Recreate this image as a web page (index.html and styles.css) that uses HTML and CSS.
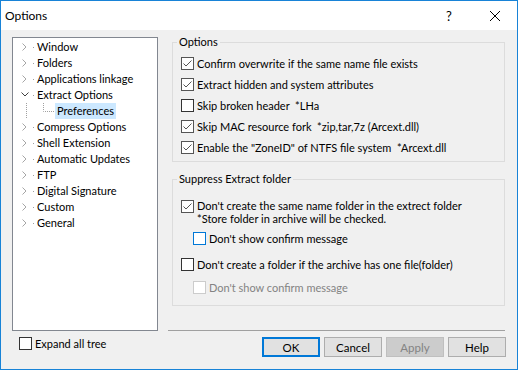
FILE: index.html
```html
<!doctype html>
<html lang="en">
<head>
<meta charset="utf-8">
<title>Options</title>
<link rel="stylesheet" href="styles.css">
</head>
<body>

<div class="window">
  <div class="titlebar">
    <span class="title">Options</span>
    <span class="tb-btn tb-help">?</span>
    <span class="tb-btn tb-close">
      <svg width="10" height="10" viewBox="0 0 10 10"><path d="M0 0L10 10M10 0L0 10" stroke="#000" stroke-width="1"/></svg>
    </span>
  </div>

  <div class="panes">
    <!-- settings tree -->
    <ul class="tree">
      <li><svg class="exp" width="18" height="16"><path d="M9.5 4.5L13 8L9.5 11.5"/></svg><i class="stub"></i><span class="node">Window</span></li>
      <li><svg class="exp" width="18" height="16"><path d="M9.5 4.5L13 8L9.5 11.5"/></svg><i class="stub"></i><span class="node">Folders</span></li>
      <li><svg class="exp" width="18" height="16"><path d="M9.5 4.5L13 8L9.5 11.5"/></svg><i class="stub"></i><span class="node">Applications linkage</span></li>
      <li><svg class="exp open" width="18" height="16"><path d="M8.5 5.5L12 9L15.5 5.5"/></svg><i class="stub"></i><span class="node">Extract Options</span></li>
      <li class="child">
        <svg width="42" height="16" class="lines">
          <path d="M13.5 0V16M30.5 0V8.5H42"/>
        </svg>
        <span class="node sel">Preferences</span>
      </li>
      <li><svg class="exp" width="18" height="16"><path d="M9.5 4.5L13 8L9.5 11.5"/></svg><i class="stub"></i><span class="node">Compress Options</span></li>
      <li><svg class="exp" width="18" height="16"><path d="M9.5 4.5L13 8L9.5 11.5"/></svg><i class="stub"></i><span class="node">Shell Extension</span></li>
      <li><svg class="exp" width="18" height="16"><path d="M9.5 4.5L13 8L9.5 11.5"/></svg><i class="stub"></i><span class="node">Automatic Updates</span></li>
      <li><svg class="exp" width="18" height="16"><path d="M9.5 4.5L13 8L9.5 11.5"/></svg><i class="stub"></i><span class="node">FTP</span></li>
      <li><svg class="exp" width="18" height="16"><path d="M9.5 4.5L13 8L9.5 11.5"/></svg><i class="stub"></i><span class="node">Digital Signature</span></li>
      <li><svg class="exp" width="18" height="16"><path d="M9.5 4.5L13 8L9.5 11.5"/></svg><i class="stub"></i><span class="node">Custom</span></li>
      <li><svg class="exp" width="18" height="16"><path d="M9.5 4.5L13 8L9.5 11.5"/></svg><i class="stub"></i><span class="node">General</span></li>
    </ul>

    <!-- property page -->
    <div class="page">
      <fieldset class="group g-options">
        <legend>Options</legend>
        <div class="opt"><span class="box on"><svg width="11" height="11"><path d="M1.5 5.5L4 8L9.5 2.5"/></svg></span>Confirm overwrite if the same name file exists</div>
        <div class="opt"><span class="box on"><svg width="11" height="11"><path d="M1.5 5.5L4 8L9.5 2.5"/></svg></span>Extract hidden and system attributes</div>
        <div class="opt"><span class="box"></span>Skip broken header&nbsp;&nbsp;*LHa</div>
        <div class="opt"><span class="box on"><svg width="11" height="11"><path d="M1.5 5.5L4 8L9.5 2.5"/></svg></span>Skip MAC resource fork&nbsp;&nbsp;*zip,tar,7z (Arcext.dll)</div>
        <div class="opt"><span class="box on"><svg width="11" height="11"><path d="M1.5 5.5L4 8L9.5 2.5"/></svg></span>Enable the "ZoneID" of NTFS file system&nbsp;&nbsp;*Arcext.dll</div>
      </fieldset>

      <fieldset class="group g-suppress">
        <legend>Suppress Extract folder</legend>
        <div class="opt multi"><span class="box on"><svg width="11" height="11"><path d="M1.5 5.5L4 8L9.5 2.5"/></svg></span><span class="lines2"><span>Don't create the same name folder in the extrect folder</span><span>*Store folder in archive will be checked.</span></span></div>
        <div class="opt sub r2"><span class="box hover"></span>Don't show confirm message</div>
        <div class="opt r3"><span class="box"></span>Don't create a folder if the archive has one file(folder)</div>
        <div class="opt sub r4 disabled"><span class="box"></span>Don't show confirm message</div>
      </fieldset>
    </div>
  </div>

  <div class="footer">
    <div class="opt expand"><span class="box"></span>Expand all tree</div>
    <div class="buttons">
      <button class="btn default">OK</button>
      <button class="btn">Cancel</button>
      <button class="btn" disabled>Apply</button>
      <button class="btn">Help</button>
    </div>
  </div>
</div>

</body>
</html>
```

FILE: styles.css
```css
*{box-sizing:border-box;}
body{margin:0;font-family:Lato,"Noto Sans",Arial,sans-serif;font-size:11px;color:#000;}
.window{width:518px;height:370px;border:1px solid #1883d7;background:#f0f0f0;display:flex;flex-direction:column;}

/* title bar */
.titlebar{height:29px;flex:none;background:#fff;display:flex;align-items:center;font-size:12px;}
.title{flex:1;padding-left:4px;}
.tb-btn{width:46px;height:29px;display:flex;align-items:center;justify-content:center;}
.tb-help{font-size:13px;}
.tb-close{width:45px;}

/* tree + page */
.panes{display:flex;gap:10px;height:294px;margin:7px 12px 0 11px;}
.tree{width:146px;flex:none;margin:0;padding:1px 0 0;list-style:none;background:#fff;border:1px solid #828790;}
.tree li{height:16px;display:flex;align-items:center;white-space:nowrap;}
.exp{flex:none;}
.exp path{fill:none;stroke:#a6a6a6;stroke-width:1;}
.exp.open path{stroke:#404040;}
.stub{width:5px;height:1px;flex:none;background:linear-gradient(90deg,transparent 2px,#a0a0a0 2px,#a0a0a0 3px,transparent 3px);}
.node{padding:0 1px;line-height:16px;}
.node.sel{padding:0 2px;background:#cce8ff;}
.lines{flex:none;}
.lines path{fill:none;stroke:#a0a0a0;stroke-dasharray:1 1;}

.page{flex:1;padding-left:4px;border-bottom:1px solid #a0a0a0;}
.group{margin:-2px 0 0;padding:4px 8px 3px;border:1px solid #dcdcdc;min-width:0;}
.group legend{padding:0 2px;margin-left:-4px;line-height:14px;}
.g-suppress{margin-top:10px;padding-top:13px;padding-bottom:7px;}

/* check rows */
.opt{display:flex;align-items:center;height:21px;white-space:nowrap;}
.box{width:13px;height:13px;flex:none;margin-right:3px;background:#fff;border:1px solid #333;display:flex;}
.box.on{border-color:#555;}
.box svg path{fill:none;stroke:#555;stroke-width:1;}
.box.hover{border-color:#0078d7;}
.opt.multi{height:auto;align-items:flex-start;}
.opt.multi .box{margin-top:1px;}
.lines2{display:flex;flex-direction:column;}
.lines2 span{height:13px;line-height:13px;}
.opt.sub{margin-left:12px;}
.r2{margin-top:3px;}
.r3{margin-top:5px;}
.r4{margin-top:2px;}
.opt.disabled{color:#838383;}
.opt.disabled .box{border-color:#ccc;}

/* bottom row */
.footer{display:flex;align-items:flex-start;padding:6px 11px 0 18px;}
.expand{height:13px;}
.buttons{margin-left:auto;display:flex;gap:4px;}
.btn{width:58px;height:20px;padding:0;font:inherit;font-size:11.5px;color:#000;background:#e1e1e1;border:1px solid #adadad;}
.btn.default{border:2px solid #0078d7;}
.btn:disabled{background:#ccc;border-color:#bfbfbf;color:#838383;}
```
